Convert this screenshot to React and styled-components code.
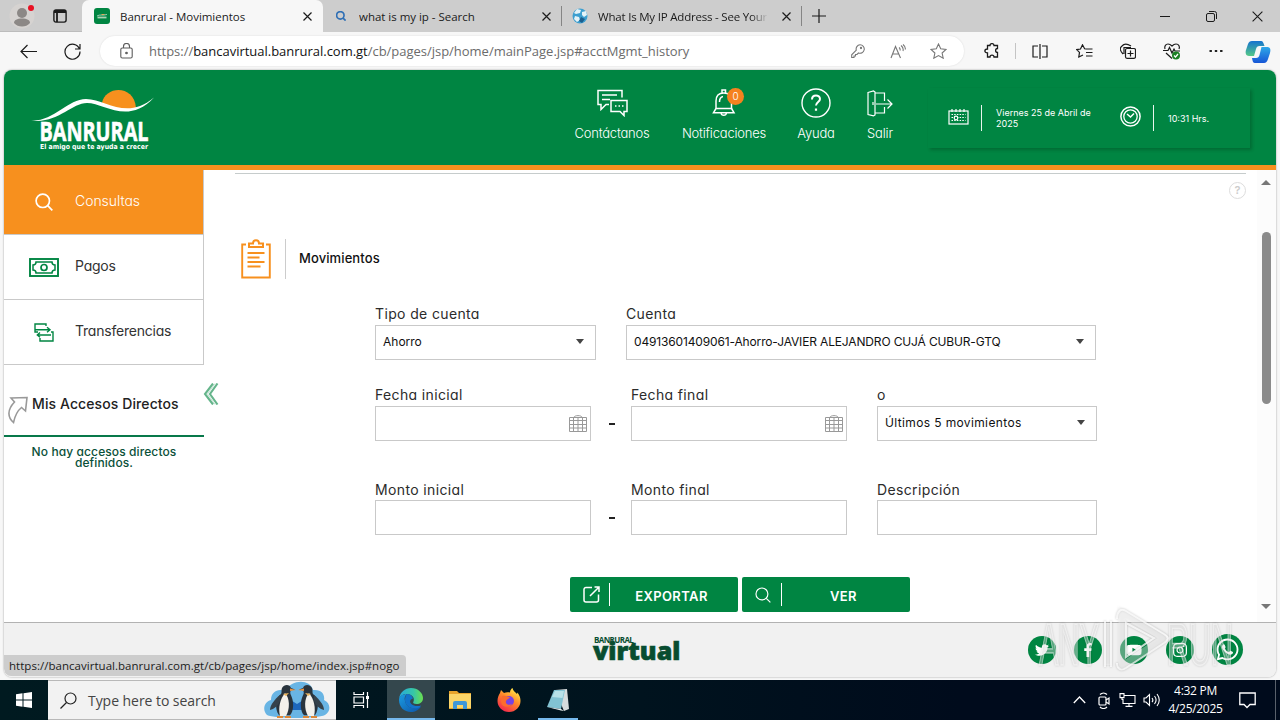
import styled, { createGlobalStyle } from 'styled-components';
import {
  FaTwitter,
  FaFacebookF,
  FaYoutube,
  FaInstagram,
  FaWhatsapp,
} from 'react-icons/fa';

const green = '#008542';
const orange = '#f7901e';

const GlobalStyle = createGlobalStyle`
  * {
    box-sizing: border-box;
  }

  body {
    margin: 0;
    overflow: hidden;
  }
`;

/* ---------- icons ---------- */

const Icon = ({ w = 16, h = w, box, sw = 1, children, ...rest }) => (
  <svg
    width={w}
    height={h}
    viewBox={box || `0 0 ${w} ${h}`}
    fill='none'
    stroke='currentColor'
    strokeWidth={sw}
    {...rest}
  >
    {children}
  </svg>
);

const Profile = () => (
  <Icon w={26} h={26} stroke='none'>
    <circle cx='13' cy='13' r='12.5' fill='#d6d3d1' />
    <circle cx='13' cy='10' r='5' fill='#8c8886' />
    <path d='M5 20c0-3 3-4.500 8-4.500s8 1.500 8 4.500c-2 2.500-5 3.500-8 3.500s-6-1-8-3.500z' fill='#8c8886' />
    <circle cx='22' cy='5' r='3' fill='#e81123' />
  </Icon>
);

const TabMenu = () => (
  <Icon w={14} h={14} sw={1.4}>
    <rect x='0.900' y='0.900' width='12.200' height='12.200' rx='2' />
    <path d='M1 3h12M1 2h12M4 3v10' strokeWidth='1.800' />
  </Icon>
);

const Cross = ({ size = 9, sw = 1.2 }) => (
  <Icon w={size} sw={sw} box='0 0 9 9'>
    <path d='M0.500 0.500l8 8M8.500 0.500l-8 8' />
  </Icon>
);

const Favicon = () => (
  <Icon w={16} stroke='none'>
    <rect width='16' height='16' rx='3' fill={green} />
    <path d='M7 7a2.500 2.500 0 0 1 4 0z' fill={orange} />
    <path d='M3 8c3-2 5 0 10-1.500' stroke='#fff' strokeWidth='0.600' />
    <path d='M3.500 9.500h9' stroke='#a9d3b5' strokeWidth='1.800' />
  </Icon>
);

const Globe = () => (
  <Icon w={16} stroke='none'>
    <circle cx='8' cy='8' r='7.500' fill='#3c9fd0' />
    <path d='M5 1l4 1-1 3-4 1-2-1zM10 4l4-1 1 4-3 2-2-2zM3 8l4 1 1 3-3 2-3-3z' fill='#e4f3f8' />
    <path d='M9 9l4 2-3 4-3-2z' fill='#1c5f8e' />
  </Icon>
);

const Magnifier = ({ size = 18, sw = 1.3 }) => (
  <Icon w={size} sw={sw} box='0 0 18 18'>
    <circle cx='7.800' cy='7.800' r='6.700' />
    <path d='M12.700 12.700l4.600 4.600' />
  </Icon>
);

const HeaderChat = () => (
  <Icon w={32} h={28} sw={1.5}>
    <path d='M13 15.500H10l-5 5v-5H2v-14h24v7' />
    <path d='M6 6h15M6 10.500h8' />
    <path d='M15 11.500h16v11h-3v4l-4-4h-9z' />
    <path d='M19 17h1.500M22.500 17H24M26 17h1.500' />
  </Icon>
);

const HeaderBell = () => (
  <Icon w={24} h={30} sw={1.5}>
    <path d='M10 4.500V2h3.500v2.500M4 21V13c0-5 2.500-8 7.800-8s7.700 3 7.700 8v8' />
    <path d='M4 20.500l-2.500 4.200h20.500L19.500 20.500M4 20.500h15.500M9 25c.5 3 5 3 5.500 0M7.500 14c0-3 1-5 3.500-5.500' />
  </Icon>
);

const HeaderHelp = () => (
  <Icon w={30} h={30} sw={1.4}>
    <circle cx='15' cy='15' r='14' />
    <path d='M11 11.500c0-5.500 8-5 8-.5 0 3-4 3-4 6.500' strokeWidth='2' />
    <path d='M15 20.500v2.300' strokeWidth='2.200' />
  </Icon>
);

const HeaderExit = () => (
  <Icon w={26} h={27} sw={1.2}>
    <path d='M8 3h9.500v8M17.500 17v6H8M1 2.500L6.500 1 8 2v23l-1.500.8L1 24.500z' />
    <path d='M6 12v3M9 14h15.500M20.500 9.500L25 14l-4.500 4.500' />
  </Icon>
);

const DateIcon = () => (
  <Icon w={21} h={17} sw={1.2}>
    <rect x='1' y='3' width='19' height='13' />
    <path d='M4 1v3M8 1v3M12 1v3M16 1v3' />
    <path d='M3.500 6.500h14M3.500 9.500h14M3.500 12.500h14' strokeDasharray='1.500 1.200' />
    <circle cx='8' cy='10' r='1.800' fill={green} />
  </Icon>
);

const ClockIcon = () => (
  <Icon w={21} h={21} sw={1.5}>
    <circle cx='10.500' cy='10.500' r='9.600' />
    <circle cx='10.500' cy='10.500' r='6.700' strokeWidth='1.300' />
    <path d='M7 8l3.500 3L14 7.500' />
  </Icon>
);

const BillIcon = () => (
  <Icon w={30} h={19} sw={1.9}>
    <rect x='1' y='1' width='28' height='17' />
    <path d='M7 4h16c0 2 1 3 3 3v5c-2 0-3 1-3 3H7c0-2-1-3-3-3V7c2 0 3-1 3-3z' strokeWidth='1.500' />
    <circle cx='15' cy='9.500' r='3' strokeWidth='1.700' />
  </Icon>
);

const TransferIcon = () => (
  <Icon w={20} h={19} sw={1.4}>
    <path d='M12 3V1H1v8h3M1.500 6.800h14M13 4.200l3 2.600-3 2.400' />
    <path d='M17 9h2v9H6v-3M17 12H3.500M6 9.500L3.300 12 6 14.300' />
  </Icon>
);

const ShortcutArrow = () => (
  <Icon w={22} h={28} sw={1.6}>
    <path d='M4 2l16-.5L18.500 15l-4-3.500c-5 4-6.500 8-8 15C.5 21 0 14 7.500 6z' />
  </Icon>
);

const CollapseArrow = () => (
  <Icon w={16} h={22} sw={2.1}>
    <path d='M10 .5L2 11l8 10.500M14.500 .5L7 11l7.500 10.500' />
    <path d='M12 .5L4.500 11l7.500 10.500' strokeWidth='1' strokeOpacity='0.4' />
  </Icon>
);

const Clipboard = () => (
  <Icon w={30} h={40} sw={1.9}>
    <path d='M5 5.500H1.200V38.500h27.600V5.500H25' />
    <path d='M8 8V4.500h4c0-4.500 6-4.500 6 0h4V8zM6.500 14h17M6.500 18.500h12M6.500 23h17M6.500 27.500h13' strokeWidth='2' />
  </Icon>
);

const CalendarIcon = () => (
  <Icon w={18} h={17} sw={1}>
    <path d='M.5 2.500h17v14H.5zM.5 5.500h17M.5 9.500h17M.5 13h17M4.500 3v13M9 3v13M13.500 3v13M5 2.500c0-2.500 8-2.500 8 0' />
  </Icon>
);

const ExportIcon = () => (
  <Icon w={17} h={17} sw={1.5}>
    <path d='M9 1.500H3a2 2 0 0 0-2 2v10.500a2 2 0 0 0 2 2h10.500a2 2 0 0 0 2-2V8.500' />
    <path d='M7 10L15.800 1.200M11.500 1h4.500v5' />
  </Icon>
);

const Copilot = () => (
  <Icon w={26} h={25} stroke='none'>
    <defs>
      <linearGradient id='cpA' x1='0' y1='0' x2='0' y2='1'>
        <stop offset='0' stopColor='#1673cf' />
        <stop offset='1' stopColor='#55c987' />
      </linearGradient>
      <linearGradient id='cpB' x1='0' y1='0' x2='0' y2='1'>
        <stop offset='0' stopColor='#2ea8e8' />
        <stop offset='1' stopColor='#1756d6' />
      </linearGradient>
    </defs>
    <path d='M7 2h9c2 0 2.500 2 3.500 5h-5c-2 0-3 1-3.500 3l-2 7H4c-3 0-4-3-3-6l2-6c.8-2 2-3 4-3z' fill='url(#cpA)' />
    <path d='M19 24h-9c-2 0-2.500-2-3-5h4c2 0 3-1 3.500-3l2-8H22c3 0 4 2 3 6l-2 6c-.8 2.500-2 4-4 4z' fill='url(#cpB)' />
  </Icon>
);

const Penguin = () => (
  <g>
    <path d='M12 5c2-4 8-4 9 0l4 1.500-4 .8c-1 2-1 3 0 5 3 6 3 16-1 20H9C4 25 6 14 11 11c1-1 0-4 1-6z' fill='#29343d' />
    <path d='M15 10c5 5 5 16 1 23h-6c-2-8 0-17 5-23z' fill='#f3f1eb' />
    <path d='M10 12C5 16 0 22 0 27c4-1 8-4 10-9z' fill='#35424b' />
    <path d='M20 5.500l6 1.500-6 1z' fill='#e9903d' />
    <path d='M13 11l6-1-3 3z' fill='#eab45c' />
    <path d='M7 33h6v2H7zM15 33h6v2h-6z' fill='#dd8838' />
  </g>
);

const Penguins = () => (
  <Icon w={66} h={38} stroke='none'>
    <path d='M3 34c-5-5-3-13 4-15 0-8 7-12 14-9C28-2 46-2 49 9c9-1 12 5 11 10 7 3 7 12 1 15-8 4-50 4-58 0z' fill='#69b5e4' />
    <path d='M25 18l8 5 8-5-3 11H28z' fill='#1d67bc' />
    <g transform='translate(6 2)'>
      <Penguin />
    </g>
    <g transform='translate(60 2) scale(-1 1)'>
      <Penguin />
    </g>
  </Icon>
);

const EdgeLogo = () => (
  <Icon w={24} h={24} stroke='none'>
    <defs>
      <linearGradient id='edA' x1='0' y1='0.300' x2='1' y2='0.300'>
        <stop offset='0' stopColor='#27a9dc' />
        <stop offset='0.600' stopColor='#36c6a8' />
        <stop offset='1' stopColor='#6be04f' />
      </linearGradient>
      <linearGradient id='edB' x1='0' y1='0' x2='1' y2='1'>
        <stop offset='0' stopColor='#1b9de2' />
        <stop offset='1' stopColor='#0d54a8' />
      </linearGradient>
    </defs>
    <path d='M0 11C1 4 6 0 12 0c7 0 12 5 12 10 0 4-3 6-6.500 6-3 0-4-1-3-2.500C16 10 13 6 8 6c-4 0-7 2-8 5z' fill='url(#edA)' />
    <path d='M0 12c0-4 4-6 8-6-2 1.500-3 4-2 7 1 5 6 8 11 7 2-.4 4-1.500 5-1.500-2 3.500-6 5.500-10 5.500C5 24 0 19 0 12z' fill='url(#edB)' />
    <path d='M8 6c3 0 5.500 2 6 4.500-4 1-4 5 1 7 2.500 1 5 .5 7 0-1 2-3 3-6 3-6 0-10-4-10-8 0-3 .5-5 2-6.500z' fill='#1273ca' />
  </Icon>
);

const FolderLogo = () => (
  <Icon w={22} h={20} stroke='none'>
    <path d='M0 1h8l2 2h12v16H0z' fill='#e8a42b' />
    <path d='M0 4h22v14H0z' fill='#fbd568' />
    <path d='M4 19v-6a2 2 0 0 1 2-2h10a2 2 0 0 1 2 2v6h-4v-4H8v4z' fill='#3f97d9' />
  </Icon>
);

const FirefoxLogo = () => (
  <Icon w={24} h={24} stroke='none'>
    <defs>
      <linearGradient id='ff' x1='0.800' y1='0' x2='0.200' y2='1'>
        <stop offset='0' stopColor='#fff04a' />
        <stop offset='0.450' stopColor='#ff8a2a' />
        <stop offset='1' stopColor='#f2204f' />
      </linearGradient>
    </defs>
    <path d='M3 5l1-3 3 3c2-1 4-1 6-.5C13 2.500 14 1 15.500 0c.5 3 3 4 4.500 6l.5-1.500C23 8 23.500 10 23.500 13c0 6-5 11-11.500 11S.5 19 .5 13c0-3 1-6 2.500-8z' fill='url(#ff)' />
    <circle cx='12' cy='13' r='5' fill='#7542e5' />
    <path d='M5 8c4-1 5 1 8 1-1 2-3 2-4 4-1 3 3 5 6 3-2 4-10 4-11-2z' fill='#fb6c2d' />
  </Icon>
);

const NotepadLogo = () => (
  <Icon w={22} h={22} stroke='none'>
    <path d='M8 1l12-1 2 20-5 2z' fill='#d6dcdd' />
    <path d='M7 1h11l-4 19L0 18z' fill='#82c3d3' />
    <path d='M8 2h9l-1.500 7L5 8z' fill='#b8e1e8' />
    <path d='M0 18l14 2 3 2-3-.5z' fill='#edf0f0' />
  </Icon>
);

/* ---------- browser chrome ---------- */

const TabStrip = () => (
  <Tabs>
    <TabCorner>
      <Profile />
      <TabMenu />
    </TabCorner>
    <Tab $active $width={241}>
      <Favicon />
      <TabTitle $ls={-0.03}>Banrural - Movimientos</TabTitle>
      <Cross />
    </Tab>
    <Tab $width={239}>
      <TabSearch>
        <Magnifier size={10} sw={3} />
      </TabSearch>
      <TabTitle $ls={-0.02}>what is my ip - Search</TabTitle>
      <Cross />
    </Tab>
    <Tab $width={240}>
      <Globe />
      <TabTitle $fade $ls={-0.2}>
        What Is My IP Address - See Your
      </TabTitle>
      <Cross />
    </Tab>
    <NewTab>
      <Icon w={14} h={14} sw={1.2}>
        <path d='M7 0v14M0 7h14' />
      </Icon>
    </NewTab>
    <WindowButtons>
      <span>
        <Icon w={10} h={10}>
          <path d='M0 5.500h10' />
        </Icon>
      </span>
      <span>
        <Icon w={11} h={11}>
          <rect x='.5' y='2.500' width='8' height='8' rx='1.500' />
          <path d='M3 .5h5.500a2 2 0 0 1 2 2V8' />
        </Icon>
      </span>
      <span>
        <Cross size={11} sw={0.9} />
      </span>
    </WindowButtons>
  </Tabs>
);

const Toolbar = () => (
  <Tools>
    <ToolButton $width={44}>
      <Icon w={17} h={15} sw={1.2}>
        <path d='M17 7.500H1M7.500 1L1 7.500 7.500 14' />
      </Icon>
    </ToolButton>
    <ToolButton $width={44}>
      <Icon w={17} h={17} sw={1.2}>
        <path d='M15.500 6A7.500 7.500 0 1 0 16 8.500M16 1v5h-5' />
      </Icon>
    </ToolButton>
    <AddressBar>
      <Lock>
        <Icon w={13} h={16} sw={1.1}>
          <rect x='.8' y='5' width='11.400' height='10' rx='1.500' />
          <path d='M3.500 5V3.500a3 3 0 0 1 6 0V5' />
          <circle cx='6.500' cy='10' r='.8' fill='currentColor' />
        </Icon>
      </Lock>
      <Url>
        https://<b>bancavirtual.banrural.com.gt</b>
        /cb/pages/jsp/home/mainPage.jsp#acctMgmt_history
      </Url>
      <ToolButton $width={40} $muted>
        <Icon w={14} h={14} sw={1.1}>
          <path d='M9 .8a4.200 4.200 0 1 1-1.500 8.100L6 10.500H4.500V12H3v1.500H.7v-2.700l4.600-4.600A4.200 4.200 0 0 1 9 .8z' />
          <circle cx='10' cy='4' r='.6' />
        </Icon>
      </ToolButton>
      <ToolButton $width={40} $muted>
        <Icon w={16} h={15} sw={1.1}>
          <path d='M1 14L5.500 2.500 10.500 14M2.500 10h6.500M9 3.500c1 .7 1.300 1.800 1 3M11 1.500c2 1.500 2.500 3.500 2 5.500M13 .5c2 1.700 2.600 3.500 2.300 5' />
        </Icon>
      </ToolButton>
      <ToolButton $width={40} $muted>
        <Icon w={17} h={16} sw={1.1}>
          <path d='M8.500 1l2.200 4.800 5.300.6-3.900 3.600 1.100 5.200-4.700-2.600-4.700 2.600 1.100-5.200L1 6.400l5.300-.6z' />
        </Icon>
      </ToolButton>
    </AddressBar>
    <Extensions>
      <Icon w={16} h={16} sw={1.3}>
        <path d='M3.500 2.500H6c0-2.500 4-2.500 4 0h3.500v3c-2.500 0-2.500 4 0 4v4.500H10c0-2.500-4-2.500-4 0H3.500V10C0 10 0 6 3.500 6z' />
      </Icon>
    </Extensions>
    <ToolButton $width={44}>
      <Icon w={16} h={15} sw={1.2}>
        <path d='M6 2H1v11h5M10 2h5v11h-5M8 0v15' />
      </Icon>
    </ToolButton>
    <ToolButton $width={44}>
      <Icon w={17} h={15} sw={1.2}>
        <path d='M10 5L8.600 4.800 6.500 .8 4.500 5 .7 5.600l2.800 2.800L2.800 13 7 11M10 5h6.500M10 8.500h6.500M10 12h6.500' />
      </Icon>
    </ToolButton>
    <ToolButton $width={44}>
      <Icon w={16} h={16} sw={1.2}>
        <path d='M3 11C-.5 7-.5 5 2 3c2.500-3 5-2.500 9 0M4 11V4.500h7' />
        <rect x='5.500' y='5.500' width='10' height='9.800' rx='1.500' />
        <path d='M10.500 7.500v6M7.500 10.500h6' />
      </Icon>
    </ToolButton>
    <ToolButton $width={44}>
      <Icon w={18} h={17} sw={1.2}>
        <path d='M2 6C1 3 3 1 5 1c2 0 3 1 4 2 1-1 2-2 4-2 3 0 4 3 3 5M0 7.500h5l1.500-3L9 10l2-4 1 2h5M3 10l6 5.500' />
        <circle cx='13' cy='12.500' r='4' fill='#1c8024' stroke='none' />
        <path d='M11 12.500l1.500 1.500 2.500-3' stroke='#fff' />
      </Icon>
    </ToolButton>
    <ToolButton $width={44}>
      <Icon w={14} h={4} stroke='none'>
        <path d='M.5 1h2.400v2H.5zM5.800 1h2.400v2H5.800zM11.100 1h2.400v2h-2.400z' fill='#222' />
      </Icon>
    </ToolButton>
    <ToolButton $width={40}>
      <Copilot />
    </ToolButton>
  </Tools>
);

/* ---------- bank page ---------- */

const Logo = () => (
  <LogoSvg width='124' height='64' viewBox='0 0 124 64'>
    <path d='M71 14C74-3 103-5 105 19c-12 4-25 0-34-5z' fill='#f7901e' />
    <path
      d='M0 31.500C22 33 37 10 55 10c20 0 40 22 68-1.500C97 36.500 73 14 56 14 40 14 27 35 0 31.500z'
      fill='#fff'
    />
    <text x='8.500' y='52' textLength='109' lengthAdjust='spacingAndGlyphs' className='name'>
      BANRURAL
    </text>
    <text x='9' y='59.500' textLength='108' lengthAdjust='spacingAndGlyphs' className='slogan'>
      El amigo que te ayuda a crecer
    </text>
  </LogoSvg>
);

const PageHeader = () => (
  <Header>
    <Logo />
    <HeaderNav>
      <NavItem $width={102}>
        <NavIcon>
          <HeaderChat />
        </NavIcon>
        Contáctanos
      </NavItem>
      <NavItem $width={122}>
        <NavIcon>
          <HeaderBell />
          <Badge>0</Badge>
        </NavIcon>
        Notificaciones
      </NavItem>
      <NavItem $width={62}>
        <NavIcon>
          <HeaderHelp />
        </NavIcon>
        Ayuda
      </NavItem>
      <NavItem $width={66}>
        <NavIcon>
          <HeaderExit />
        </NavIcon>
        Salir
      </NavItem>
    </HeaderNav>
    <DateBox>
      <DateIcon />
      <DateText $width={139}>
        Viernes 25 de Abril de
        <br />
        2025
      </DateText>
      <ClockIcon />
      <DateText $width={80}>10:31 Hrs.</DateText>
    </DateBox>
  </Header>
);

const Sidebar = () => (
  <Side>
    <SideItem $active>
      <SideIcon>
        <Magnifier size={18} sw={1.7} />
      </SideIcon>
      <span>Consultas</span>
    </SideItem>
    <SideItem>
      <SideIcon>
        <BillIcon />
      </SideIcon>
      <span>Pagos</span>
    </SideItem>
    <SideItem>
      <SideIcon>
        <TransferIcon />
      </SideIcon>
      <span>Transferencias</span>
    </SideItem>
    <ShortcutsTitle>
      <ShortcutArrow />
      <span>Mis Accesos Directos</span>
    </ShortcutsTitle>
    <ShortcutsEmpty>
      No hay accesos directos
      <br />
      definidos.
    </ShortcutsEmpty>
    <Collapse>
      <CollapseArrow />
    </Collapse>
  </Side>
);

const Field = ({ label, width, value, kind, ls, tight }) => (
  <FieldWrap $width={width}>
    <Label $tight={tight}>{label}</Label>
    <Control>
      <Value $ls={ls}>{value}</Value>
      {kind === 'select' && <Caret />}
      {kind === 'date' && <CalendarIcon />}
    </Control>
  </FieldWrap>
);

const Content = () => (
  <Main>
    <TopLine />
    <HelpRow>
      <HelpDot>?</HelpDot>
    </HelpRow>
    <Title>
      <Clipboard />
      <h1>Movimientos</h1>
    </Title>
    <Form>
      <FormRow $height={81}>
        <Field label='Tipo de cuenta' width={221} value='Ahorro' kind='select' ls={0} />
        <Gap $width={30} />
        <Field
          label='Cuenta'
          width={470}
          value='04913601409061-Ahorro-JAVIER ALEJANDRO CUJÁ CUBUR-GTQ'
          kind='select'
          ls={-0.15}
        />
      </FormRow>
      <FormRow $height={95}>
        <Field label='Fecha inicial' width={216} kind='date' />
        <Dash />
        <Field label='Fecha final' width={216} kind='date' />
        <Gap $width={30} />
        <Field label='o' width={220} value='Últimos 5 movimientos' kind='select' ls={0.37} />
      </FormRow>
      <FormRow $height={97}>
        <Field label='Monto inicial' width={216} tight />
        <Dash $tight />
        <Field label='Monto final' width={216} tight />
        <Gap $width={30} />
        <Field label='Descripción' width={220} tight />
      </FormRow>
    </Form>
    <Actions>
      <Action>
        <ActionIcon>
          <ExportIcon />
        </ActionIcon>
        <span>EXPORTAR</span>
      </Action>
      <Action>
        <ActionIcon>
          <Magnifier size={16} />
        </ActionIcon>
        <span>VER</span>
      </Action>
    </Actions>
  </Main>
);

const social = [
  { name: 'twitter', Glyph: FaTwitter, size: 14 },
  { name: 'facebook', Glyph: FaFacebookF, size: 14 },
  { name: 'youtube', Glyph: FaYoutube, size: 16 },
  { name: 'instagram', Glyph: FaInstagram, size: 16 },
  { name: 'whatsapp', Glyph: FaWhatsapp, size: 25 },
];

const PageFooter = () => (
  <Footer>
    <Brand>
      <small>BANRURAL</small>
      <strong>virtual</strong>
    </Brand>
    <Social>
      {social.map(({ name, Glyph, size }) => (
        <SocialDot key={name} $big={name === 'whatsapp'}>
          <Glyph size={size} />
        </SocialDot>
      ))}
    </Social>
    <StatusUrl>
      https://bancavirtual.banrural.com.gt/cb/pages/jsp/home/index.jsp#nogo
    </StatusUrl>
  </Footer>
);

/* ---------- desktop ---------- */

const Taskbar = () => (
  <Bar>
    <BarButton $width={48}>
      <Icon w={16} h={16} stroke='none'>
        <path d='M0 2.300L6.500 1.300V7.500H0zM7.500 1.200L16 0v7.500H7.500zM0 8.500h6.500v6.200L0 13.700zM7.500 8.500H16V16l-8.500-1.200z' fill='#fff' />
      </Icon>
    </BarButton>
    <Search>
      <Icon w={17} h={17} sw={1.2}>
        <circle cx='10.500' cy='6.500' r='5.500' />
        <path d='M6.500 10.500L.5 16.500' />
      </Icon>
      <span>Type here to search</span>
      <Penguins />
    </Search>
    <BarButton $width={51}>
      <Icon w={18} h={16} sw={1.2}>
        <path d='M1 0v2.500h9.500V0M1 16v-2.500h9.500V16M1 5h9.500v6H1zM14.500 0v16' />
        <rect x='13' y='4' width='3' height='3' fill='#fff' stroke='none' />
      </Icon>
    </BarButton>
    <BarButton $width={48} $active $line={48}>
      <EdgeLogo />
    </BarButton>
    <BarButton $width={49}>
      <FolderLogo />
    </BarButton>
    <BarButton $width={49}>
      <FirefoxLogo />
    </BarButton>
    <BarButton $width={49} $line={40}>
      <NotepadLogo />
    </BarButton>
    <Tray>
      <Icon w={13} h={8} sw={1.3}>
        <path d='M.8 7l5.700-6 5.700 6' />
      </Icon>
      <Icon w={12} h={17} sw={1.2}>
        <rect x='1' y='5' width='7' height='8' rx='1' />
        <path d='M8 8l3-2v6l-3-2M2 2.500c2-2 5-2 7 0M2 15c2 2 5 2 7 0' />
      </Icon>
      <Icon w={17} h={14} sw={1.1}>
        <path d='M5 2.500h11v8H4V6M10 10.500v3M6.500 13.400h7M1 .6h4v4H1zM3 4.500V7' />
      </Icon>
      <Icon w={17} h={14} sw={1.1}>
        <path d='M1 5h2l3.500-3.500v11L3 9H1zM9 5c1 1.300 1 3 0 4M11.500 3c2 2.500 2 5.500 0 8M14 1c3 4 3 8 0 12' />
      </Icon>
      <Clock>
        4:32 PM
        <br />
        4/25/2025
      </Clock>
      <Icon w={17} h={17} sw={1.3}>
        <path d='M.8 1h15.400v11.500H11L8 15.500l-3-3H.8z' />
      </Icon>
      <PeekLine />
    </Tray>
  </Bar>
);

const Watermark = () => (
  <Mark width='210' height='76' viewBox='0 0 210 76'>
    <text x='5' y='63' textLength='60' lengthAdjust='spacingAndGlyphs'>
      ANY
    </text>
    <path className='band' d='M74 21v42M88 66V11l42 25-42 28' />
    <path d='M71 19v46M77 19v46M83 17c0-8 4-11 9-8l38 23c5 3 5 6 0 9L92 66c-5 3-9 1-9-5' />
    <path d='M92 51V21l28 15-28 19z' />
    <text x='133' y='63' textLength='66' lengthAdjust='spacingAndGlyphs'>
      RUN
    </text>
  </Mark>
);

const App = () => {
  return (
    <Screen>
      <GlobalStyle />
      <TabStrip />
      <Toolbar />
      <Page>
        <PageHeader />
        <Body>
          <Sidebar />
          <Content />
          <Scrollbar>
            <ScrollArrow $up />
            <Thumb />
            <ScrollArrow />
          </Scrollbar>
        </Body>
        <PageFooter />
      </Page>
      <Taskbar />
      <Watermark />
    </Screen>
  );
};

const Screen = styled.div`
  width: 1280px;
  height: 720px;
  display: flex;
  flex-direction: column;
  background: #f7f7f7;
  font-family: 'Open Sans', 'Noto Sans', sans-serif;
  color: #1b1b1b;
  position: relative;
  overflow: hidden;

  svg {
    display: block;
    flex-shrink: 0;
  }
`;

const Tabs = styled.div`
  height: 32px;
  flex-shrink: 0;
  display: flex;
  background: #cdcdcd;
`;

const TabCorner = styled.div`
  width: 82px;
  display: flex;
  align-items: center;
  gap: 18px;
  padding-left: 9px;
  border-bottom: 1px solid #bcbcbc;
`;

const Tab = styled.div`
  width: ${({ $width }) => $width}px;
  display: flex;
  align-items: center;
  padding: 0 11px 0 ${({ $active }) => ($active ? 12 : 10)}px;
  background: ${({ $active }) => ($active ? '#f7f7f7' : 'transparent')};
  border-radius: ${({ $active }) => ($active ? '7px 7px 0 0' : 0)};
  position: relative;

  &::after {
    content: '';
    position: absolute;
    right: 0;
    top: 6px;
    width: ${({ $active }) => ($active ? 0 : 1)}px;
    height: 20px;
    background: #858585;
  }
`;

const TabTitle = styled.span`
  flex: 1;
  min-width: 0;
  margin: 0 14px 0 10px;
  overflow: hidden;
  white-space: nowrap;
  font-size: 11.5px;
  letter-spacing: ${({ $ls }) => $ls}px;
  mask-image: ${({ $fade }) =>
    $fade ? 'linear-gradient(90deg, #000 90%, transparent)' : 'none'};
`;

const TabSearch = styled.span`
  width: 16px;
  display: flex;
  justify-content: center;
  color: #2f6fb5;
`;

const NewTab = styled.div`
  width: 34px;
  display: flex;
  align-items: center;
  justify-content: center;
`;

const WindowButtons = styled.div`
  margin-left: auto;
  display: flex;

  span {
    width: 46px;
    display: flex;
    align-items: center;
    justify-content: center;
  }
`;

const Tools = styled.div`
  height: 38px;
  flex-shrink: 0;
  display: flex;
  align-items: center;
  padding: 0 2px 0 6px;
`;

const ToolButton = styled.div`
  width: ${({ $width }) => $width}px;
  flex-shrink: 0;
  display: flex;
  align-items: center;
  justify-content: center;
  color: ${({ $muted }) => ($muted ? '#777' : '#1b1b1b')};
`;

const AddressBar = styled.div`
  width: 864px;
  height: 30px;
  margin-left: 6px;
  padding-right: 6px;
  display: flex;
  align-items: center;
  flex-shrink: 0;
  border-radius: 15px;
  background: #fff;
  box-shadow: 0 0 2px rgba(0, 0, 0, 0.12);
`;

const Lock = styled.div`
  width: 49px;
  padding-left: 20px;
  color: #5c5c5c;
`;

const Url = styled.div`
  flex: 1;
  white-space: nowrap;
  font-size: 13px;
  letter-spacing: -0.02px;
  color: #6b6b6b;

  b {
    font-weight: 400;
    color: #111;
  }
`;

const Extensions = styled.div`
  width: 52px;
  height: 16px;
  margin-right: 2px;
  padding-left: 20px;
  border-right: 1px solid #c4c4c4;
`;

const Page = styled.div`
  width: 1272px;
  height: 607px;
  flex-shrink: 0;
  margin-left: 4px;
  display: flex;
  flex-direction: column;
  border-radius: 8px;
  overflow: hidden;
  background: #fff;
  box-shadow: 0 0 2px rgba(0, 0, 0, 0.4);
  font-family: Inter, 'Open Sans', sans-serif;
  font-feature-settings: 'cv11';
`;

const Header = styled.header`
  height: 100px;
  flex-shrink: 0;
  display: flex;
  background: ${green};
  border-bottom: 5px solid ${orange};
  color: #fff;
`;

const LogoSvg = styled.svg`
  margin: 19px 0 0 27px;

  text {
    fill: #fff;
    font-family: 'Open Sans', sans-serif;
    font-weight: 700;
  }

  .name {
    font-size: 26px;
    stroke: #fff;
    stroke-width: 0.6;
  }

  .slogan {
    font-family: 'DejaVu Sans', sans-serif;
    font-size: 7px;
  }
`;

const HeaderNav = styled.nav`
  margin-left: 406px;
  display: flex;
`;

const NavItem = styled.div`
  width: ${({ $width }) => $width}px;
  display: flex;
  flex-direction: column;
  align-items: center;
  font-size: 13px;
  font-weight: 300;
  line-height: 18px;
  letter-spacing: -0.2px;
`;

const NavIcon = styled.div`
  height: 40px;
  margin: 13px 0 1px;
  display: flex;
  align-items: center;
  position: relative;
`;

const Badge = styled.span`
  position: absolute;
  left: 15px;
  top: 5px;
  width: 17px;
  height: 17px;
  border-radius: 50%;
  background: #f5821f;
  font-size: 10px;
  line-height: 17px;
  text-align: center;
`;

const DateBox = styled.div`
  width: 322px;
  height: 60px;
  margin: 18px 26px 0 auto;
  padding-left: 20px;
  display: flex;
  align-items: center;
  box-shadow: 2px 2px 3px rgba(0, 50, 20, 0.3);

  svg {
    margin-top: -3px;
  }
`;

const DateText = styled.div`
  width: ${({ $width }) => $width}px;
  height: 26px;
  margin-left: 12px;
  padding-left: 14px;
  display: flex;
  align-items: center;
  border-left: 1px solid #e9f5ee;
  font-size: 9px;
  line-height: 11px;
`;

const Body = styled.div`
  flex: 1;
  min-height: 0;
  display: flex;
`;

const Side = styled.aside`
  width: 200px;
  flex-shrink: 0;
  position: relative;
`;

const SideItem = styled.div`
  height: 65px;
  display: flex;
  align-items: center;
  border: solid #c9c9c9;
  border-width: 0 1px 1px 0;
  background: ${({ $active }) => ($active ? orange : '#fff')};
  color: ${({ $active }) => ($active ? '#fff' : green)};
  font-size: 14px;

  span {
    padding-bottom: 3px;
    font-weight: ${({ $active }) => ($active ? 300 : 400)};
    letter-spacing: ${({ $active }) => ($active ? -0.05 : -0.22)}px;
    color: ${({ $active }) => ($active ? '#fff' : '#333')};
  }
`;

const SideIcon = styled.div`
  width: 71px;
  padding-left: 8px;
  display: flex;
  justify-content: center;
`;

const ShortcutsTitle = styled.div`
  height: 72px;
  padding: 7px 0 0 3px;
  display: flex;
  align-items: center;
  gap: 3px;
  border-bottom: 2px solid #08784a;
  color: #999;
  font-size: 14px;

  svg {
    margin-top: 13px;
  }

  span {
    color: #222;
    font-weight: 500;
    letter-spacing: 0.1px;
    white-space: nowrap;
  }
`;

const ShortcutsEmpty = styled.p`
  margin: 9px 0 0;
  text-align: center;
  font-size: 12px;
  font-weight: 500;
  line-height: 11px;
  letter-spacing: 0.1px;
  color: #0a5039;
`;

const Collapse = styled.div`
  position: absolute;
  left: 199px;
  top: 213px;
  color: #65b58b;
`;

const Main = styled.main`
  width: 1053px;
  padding-left: 31px;
  display: flex;
  flex-direction: column;
`;

const TopLine = styled.div`
  width: 1011px;
  height: 1px;
  margin-top: 3px;
  background: #c6cccc;
`;

const HelpRow = styled.div`
  width: 1011px;
  height: 65px;
  padding-top: 8px;
  display: flex;
  justify-content: flex-end;
`;

const HelpDot = styled.span`
  width: 17px;
  height: 17px;
  border: 1px solid #ddd;
  border-radius: 50%;
  text-align: center;
  font-size: 11px;
  font-weight: 600;
  line-height: 15px;
  color: #ccc;
`;

const Title = styled.div`
  height: 40px;
  padding-left: 6px;
  display: flex;
  color: ${orange};

  h1 {
    margin: 0 0 0 14px;
    padding-left: 13px;
    border-left: 1px solid #ccc;
    font-size: 13px;
    font-weight: 500;
    line-height: 38px;
    letter-spacing: 0.1px;
    color: #111;
  }
`;

const Form = styled.div`
  padding: 25px 0 0 140px;
`;

const FormRow = styled.div`
  height: ${({ $height }) => $height}px;
  display: flex;
`;

const FieldWrap = styled.div`
  width: ${({ $width }) => $width}px;
`;

const Label = styled.div`
  height: ${({ $tight }) => ($tight ? 20 : 21)}px;
  font-size: 14px;
  line-height: 20px;
  letter-spacing: 0.36px;
  color: #2b2b2b;
`;

const Control = styled.div`
  height: 35px;
  padding: 0 4px 0 7px;
  display: flex;
  align-items: center;
  border: 1px solid #c9c9c9;
  color: #999;

  svg {
    margin: -1px -1px 0 0;
  }
`;

const Value = styled.span`
  flex: 1;
  padding-bottom: 2px;
  white-space: nowrap;
  font-size: 12px;
  letter-spacing: ${({ $ls }) => $ls}px;
  color: #111;
`;

const Caret = styled.i`
  margin: -2px 7px 0 0;
  border: 4px solid transparent;
  border-top: 5px solid #444;
  border-bottom: 0;
`;

const Gap = styled.div`
  width: ${({ $width }) => $width}px;
`;

const Dash = styled.div`
  width: 40px;
  padding: ${({ $tight }) => ($tight ? 37 : 38)}px 0 0 18px;

  &::before {
    content: '';
    display: block;
    width: 6px;
    height: 2px;
    background: #222;
  }
`;

const Actions = styled.div`
  padding-left: 335px;
  display: flex;
  gap: 4px;
`;

const Action = styled.div`
  width: 168px;
  height: 35px;
  display: flex;
  align-items: center;
  border-radius: 2px;
  background: ${green};
  color: #fff;
  font-size: 13px;
  font-weight: 600;
  letter-spacing: 0.4px;

  span {
    flex: 1;
    padding: 3px 5px 0 0;
    text-align: center;
  }
`;

const ActionIcon = styled.div`
  width: 40px;
  height: 23px;
  padding-left: 3px;
  display: flex;
  align-items: center;
  justify-content: center;
  border-right: 1px solid #fff;
`;

const Scrollbar = styled.div`
  width: 19px;
  padding: 10px 1px 13px 0;
  display: flex;
  flex-direction: column;
  align-items: center;
  background: #fcfcfc;
`;

const ScrollArrow = styled.i`
  border: 5px solid transparent;
  border-${({ $up }) => ($up ? 'bottom' : 'top')}: 5px solid #777;
  border-${({ $up }) => ($up ? 'top' : 'bottom')}: 0;
`;

const Thumb = styled.div`
  width: 9px;
  height: 172px;
  margin: 47px 0 auto;
  border-radius: 5px;
  background: #8b8b8b;
`;

const Footer = styled.footer`
  height: 55px;
  flex-shrink: 0;
  display: flex;
  background: #f1f1f1;
  border-top: 1px solid #b2b2b2;
  position: relative;
`;

const Brand = styled.div`
  width: 92px;
  margin: 13px 0 0 589px;
  display: flex;
  flex-direction: column;
  font-family: 'Open Sans', sans-serif;
  color: #084d30;

  small {
    padding-left: 1px;
    font-size: 8px;
    font-weight: 700;
    line-height: 8px;
    letter-spacing: -0.6px;
  }

  strong {
    font-size: 25px;
    font-weight: 800;
    line-height: 12px;
    letter-spacing: 0.05px;
    -webkit-text-stroke: 0.7px #084d30;
  }
`;

const Social = styled.div`
  margin: 11px 33px 0 auto;
  display: flex;
  align-items: center;
  gap: 18px;
  height: 31px;
`;

const SocialDot = styled.span`
  width: ${({ $big }) => ($big ? 31 : 28)}px;
  height: ${({ $big }) => ($big ? 31 : 28)}px;
  display: flex;
  align-items: center;
  justify-content: center;
  border-radius: 50%;
  background: ${green};
  color: #fff;
`;

const StatusUrl = styled.div`
  position: absolute;
  left: 0;
  bottom: 1px;
  width: 402px;
  height: 21px;
  padding-left: 5px;
  border-radius: 0 4px 0 7px;
  background: #cdcdcd;
  font-family: 'Open Sans', sans-serif;
  font-size: 11.5px;
  line-height: 21px;
  letter-spacing: 0.03px;
  white-space: nowrap;
`;

const Bar = styled.div`
  height: 40px;
  margin-top: 3px;
  flex-shrink: 0;
  display: flex;
  background: linear-gradient(90deg, #001a20, #00131e 50%, #000b1c 75%, #000b1c);
  color: #fff;
`;

const BarButton = styled.div`
  width: ${({ $width }) => $width}px;
  display: flex;
  align-items: center;
  justify-content: center;
  position: relative;
  background: ${({ $active }) => ($active ? '#34474d' : 'transparent')};

  &::after {
    content: '';
    position: absolute;
    bottom: 0;
    width: ${({ $line }) => $line || 0}px;
    height: 2px;
    background: #76b9ed;
  }
`;

const Search = styled.div`
  width: 288px;
  padding: 0 6px 0 12px;
  display: flex;
  align-items: center;
  background: #f2f2f2;
  border: solid #b8b8b8;
  border-width: 1px 0;
  color: #222;

  span {
    flex: 1;
    margin-left: 11px;
    font-size: 14px;
    letter-spacing: -0.05px;
    white-space: nowrap;
    color: #444;
  }
`;

const Tray = styled.div`
  margin-left: auto;
  display: flex;
  align-items: center;

  svg {
    margin-right: 12px;
  }

  svg:nth-of-type(2) {
    margin-right: 9px;
  }

  svg:nth-of-type(3) {
    margin-right: 7px;
  }

  svg:nth-of-type(4) {
    margin-right: 0;
  }

  svg:nth-of-type(5) {
    margin-right: 19px;
  }
`;

const Clock = styled.div`
  width: 71px;
  margin-right: 8px;
  text-align: center;
  font-size: 12px;
  line-height: 18px;
  letter-spacing: -0.3px;
`;

const PeekLine = styled.div`
  width: 5px;
  height: 40px;
  border-left: 1px solid #59616b;
`;

/* translucent recorder stamp over the lower right corner */
const Mark = styled.svg`
  position: absolute;
  left: 1034px;
  top: 602px;
  fill: none;
  stroke: rgba(255, 255, 255, 0.75);
  stroke-width: 2;
  filter: drop-shadow(0 0 1px rgba(0, 0, 0, 0.3));

  .band {
    stroke: rgba(255, 255, 255, 0.35);
    stroke-width: 7;
  }

  text {
    font-family: 'Liberation Sans', sans-serif;
    font-size: 60px;
    stroke: rgba(255, 255, 255, 0.5);
    stroke-width: 1.5;
    fill: rgba(255, 255, 255, 0.35);
  }
`;

export default App;
